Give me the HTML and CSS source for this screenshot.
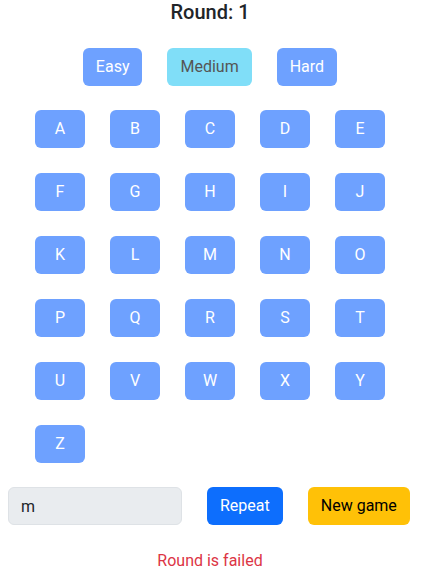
FILE: index.html
```html
<!DOCTYPE html>
<html>
<head>
<meta charset="utf-8">
<link rel="stylesheet" href="styles.css">
</head>
<body>
<div class="app">
  <h5 class="title">Round: 1</h5>
  <div class="levels">
    <button class="btn level">Easy</button>
    <button class="btn level active">Medium</button>
    <button class="btn level">Hard</button>
  </div>
  <div class="letters">
    <button class="btn letter">A</button>
    <button class="btn letter">B</button>
    <button class="btn letter">C</button>
    <button class="btn letter">D</button>
    <button class="btn letter">E</button>
    <button class="btn letter">F</button>
    <button class="btn letter">G</button>
    <button class="btn letter">H</button>
    <button class="btn letter">I</button>
    <button class="btn letter">J</button>
    <button class="btn letter">K</button>
    <button class="btn letter">L</button>
    <button class="btn letter">M</button>
    <button class="btn letter">N</button>
    <button class="btn letter">O</button>
    <button class="btn letter">P</button>
    <button class="btn letter">Q</button>
    <button class="btn letter">R</button>
    <button class="btn letter">S</button>
    <button class="btn letter">T</button>
    <button class="btn letter">U</button>
    <button class="btn letter">V</button>
    <button class="btn letter">W</button>
    <button class="btn letter">X</button>
    <button class="btn letter">Y</button>
    <button class="btn letter">Z</button>
  </div>
  <div class="controls">
    <input class="answer" type="text" value="m" readonly>
    <button class="btn repeat">Repeat</button>
    <button class="btn newgame">New game</button>
  </div>
  <p class="status">Round is failed</p>
</div>
</body>
</html>
```
FILE: styles.css
```css
html, body {
  margin: 0;
  padding: 0;
  background: #fff;
}
body {
  font-family: Roboto, "Liberation Sans", sans-serif;
  color: #212529;
  font-size: 16px;
  line-height: 24px;
}
.app {
  width: 404px;
  padding: 0 8px;
  display: flex;
  flex-direction: column;
  align-items: center;
}
.title {
  margin: 0;
  font-size: 20px;
  line-height: 24px;
  font-weight: 500;
  text-align: center;
}
.btn {
  font-family: inherit;
  font-size: 16px;
  line-height: 24px;
  height: 38px;
  padding: 6px 12px;
  border: 1px solid transparent;
  border-radius: 6px;
  cursor: pointer;
}
.levels {
  margin-top: 24px;
  display: flex;
  gap: 25px;
}
.level {
  background: #6ea1ff;
  color: #fff;
}
.level.active {
  background: #80def8;
  color: #555;
}
.letters {
  margin-top: 24px;
  display: grid;
  grid-template-columns: repeat(5, 50px);
  gap: 25px;
}
.letter {
  width: 50px;
  background: #6ea1ff;
  color: #fff;
  padding: 6px 0;
}
.controls {
  margin-top: 24px;
  align-self: stretch;
  display: flex;
  gap: 25px;
}
.answer {
  flex: none;
  width: 174px;
  height: 38px;
  box-sizing: border-box;
  background: #e9ecef;
  border: 1px solid #dee2e6;
  border-radius: 6px;
  padding: 6px 12px;
  font-family: inherit;
  font-size: 16px;
  color: #212529;
  outline: none;
}
.repeat {
  background: #0d6efd;
  color: #fff;
}
.newgame {
  background: #ffc107;
  color: #000;
}
.status {
  margin: 24px 0 0;
  color: #dc3545;
  text-align: center;
}
```
